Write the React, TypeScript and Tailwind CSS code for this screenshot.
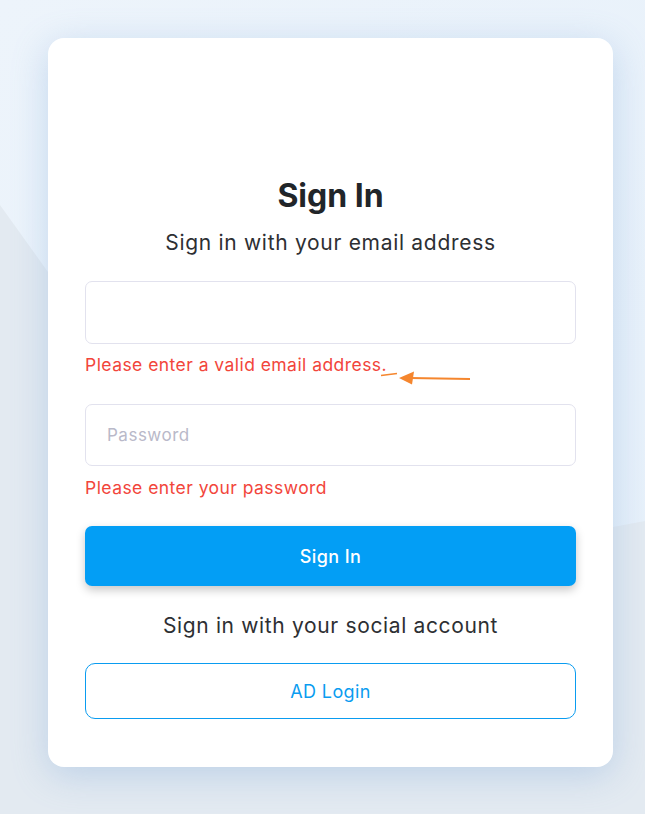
import { useState } from "react";

// Sign-in card with inline validation messages

export default function App() {
  const [email, setEmail] = useState("");
  const [password, setPassword] = useState("");

  return (
    <div
      className="relative h-[814px] w-full overflow-hidden bg-[#eaf2fa]"
      style={{ fontFamily: "Inter, 'Noto Sans', sans-serif" }}
    >
      {/* Background shape */}
      <svg className="absolute inset-0 h-full w-full" viewBox="0 0 645 814" preserveAspectRatio="none">
        <defs>
          <linearGradient id="bgTop" x1="0" y1="0" x2="1" y2="1">
            <stop offset="0" stopColor="#edf4fb" />
            <stop offset="1" stopColor="#e6f0fa" />
          </linearGradient>
        </defs>
        <rect x="0" y="0" width="645" height="814" fill="url(#bgTop)" />
        <polygon points="0,205 240,540 613,527 645,521 645,814 0,814" fill="#e3eaf1" />
      </svg>

      {/* Card */}
      <div className="relative ml-[48px] mt-[38px] w-[565px] rounded-[16px] bg-white px-[37px] pb-[48px] pt-[138px] shadow-[0_8px_36px_rgba(110,155,210,0.32)]">
        <h1 className="text-center text-[32px] font-bold leading-[40px] text-[#212529]">Sign In</h1>
        <p className="mt-[13px] text-center text-[21px] leading-[28px] tracking-[0.7px] text-[#2d2f33]">
          Sign in with your email address
        </p>

        <input
          value={email}
          onChange={(e) => setEmail(e.target.value)}
          className="mt-[24px] block h-[63px] w-full rounded-[7px] border border-[#e2e2ee] px-[21px] text-[17px] text-[#333] outline-none"
        />
        <p className="mt-[9px] text-[17.5px] leading-[24px] tracking-[0.45px] text-[#f2453b]">
          Please enter a valid email address.
        </p>

        <input
          type="password"
          value={password}
          onChange={(e) => setPassword(e.target.value)}
          placeholder="Password"
          className="mt-[27px] block h-[62px] w-full rounded-[7px] border border-[#e2e2ee] px-[21px] text-[17px] tracking-[0.5px] text-[#333] outline-none placeholder:text-[#b9b9c9]"
        />
        <p className="mt-[10px] text-[17.5px] leading-[24px] tracking-[0.45px] text-[#f2453b]">
          Please enter your password
        </p>

        <button className="mt-[26px] flex h-[60px] w-full items-center justify-center rounded-[7px] bg-[#039ef5] text-[18px] font-medium tracking-[0.4px] text-white shadow-[0_4px_10px_rgba(0,0,0,0.22)]">
          Sign In
        </button>

        <p className="mt-[26px] text-center text-[21px] leading-[28px] tracking-[0.65px] text-[#2d2f33]">
          Sign in with your social account
        </p>

        <button className="mt-[23px] flex h-[56px] w-full items-center justify-center rounded-[10px] border border-[#0a9cf0] bg-white text-[18px] tracking-[0.4px] text-[#0a9cf0]">
          AD Login
        </button>
      </div>

      {/* Annotation arrow */}
      <svg className="pointer-events-none absolute left-0 top-0" width="645" height="814">
        <line x1="381" y1="375.5" x2="397" y2="373.5" stroke="#f5862e" strokeWidth="1.6" />
        <line x1="410" y1="378" x2="470" y2="379" stroke="#f5862e" strokeWidth="1.8" />
        <polygon points="399,378 414,371.5 412,384.5" fill="#f5862e" />
      </svg>
    </div>
  );
}
